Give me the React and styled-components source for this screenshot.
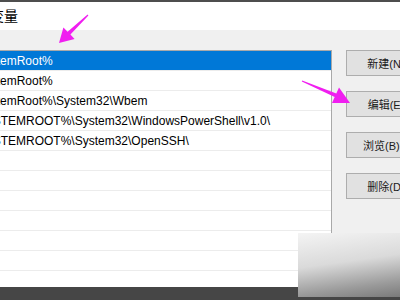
import React from "react";
import styled, { createGlobalStyle } from "styled-components";

const GlobalStyle = createGlobalStyle`
  html, body {
    margin: 0;
    padding: 0;
    background: #f0f0f0;
  }
  body {
    font-family: "Liberation Sans", "Noto Sans CJK SC", sans-serif;
  }
`;

const Page = styled.div`
  position: relative;
  width: 400px;
  height: 300px;
  overflow: hidden;
  display: flex;
  flex-direction: column;
`;

const TopStrip = styled.div`
  height: 2px;
  background: #4e4e4e;
`;

const TitleBar = styled.div`
  height: 28px;
  background: #ffffff;
  display: flex;
  align-items: center;
  padding-bottom: 3px;
  box-sizing: border-box;
  overflow: hidden;
`;

const Title = styled.span`
  margin-left: -66px;
  font-size: 14px;
  color: #000;
  white-space: nowrap;
`;

const Body = styled.div`
  flex: 1;
  display: flex;
  padding-top: 20px;
  background: #f0f0f0;
  overflow: hidden;
`;

const ListBox = styled.div`
  margin-left: -40px;
  width: 372px;
  flex-shrink: 0;
  box-sizing: border-box;
  border: 1px solid #a9a9a9;
  background: #ffffff;
  align-self: flex-start;
`;

const Row = styled.div`
  height: 20px;
  box-sizing: border-box;
  border-bottom: 1px solid #ececec;
  padding-left: 5px;
  display: flex;
  align-items: center;
  font-size: 12px;
  white-space: nowrap;
  color: ${(p) => (p.$selected ? "#ffffff" : "#000000")};
  background: ${(p) => (p.$selected ? "#0078d7" : "transparent")};
`;

const ButtonColumn = styled.div`
  display: flex;
  flex-direction: column;
  padding-left: 14px;
  flex-shrink: 0;
`;

const Button = styled.div`
  width: 80px;
  height: 26px;
  box-sizing: border-box;
  border: 1px solid #adadad;
  background: #e1e1e1;
  font-size: 11px;
  color: #1a1a1a;
  display: flex;
  align-items: center;
  justify-content: center;
  white-space: nowrap;
  margin-bottom: ${(p) => p.$gap}px;
`;

const BottomBar = styled.div`
  height: 13px;
  background: #464646;
`;

const Shade = styled.div`
  position: absolute;
  left: 298px;
  top: 233px;
  width: 102px;
  height: 64px;
  background: linear-gradient(172deg, #f4f4f4 0%, #dadada 45%, #9a9a9a 80%, #7a7a7a 100%);
`;

const Arrows = styled.svg`
  position: absolute;
  left: 0;
  top: 0;
  pointer-events: none;
`;

const paths = [
  "%SystemRoot%",
  "%SystemRoot%",
  "%SystemRoot%\\System32\\Wbem",
  "%SYSTEMROOT%\\System32\\WindowsPowerShell\\v1.0\\",
  "%SYSTEMROOT%\\System32\\OpenSSH\\",
  "", "", "", "", "", "", "", "",
];

const buttons = [
  { label: "新建(N)", gap: 15 },
  { label: "编辑(E)", gap: 15 },
  { label: "浏览(B)...", gap: 15 },
  { label: "删除(D)", gap: 35 },
  { label: "上移(U)", gap: 15 },
];

export default function App() {
  return (
    <>
      <GlobalStyle />
      <Page>
        <TopStrip />
        <TitleBar>
          <Title>编辑环境变量</Title>
        </TitleBar>
        <Body>
          <ListBox>
            {paths.map((p, i) => (
              <Row key={i} $selected={i === 0}>
                {p}
              </Row>
            ))}
          </ListBox>
          <ButtonColumn>
            {buttons.map((b) => (
              <Button key={b.label} $gap={b.gap}>
                {b.label}
              </Button>
            ))}
          </ButtonColumn>
        </Body>
        <BottomBar />
        <Shade />
        <Arrows width="400" height="300" viewBox="0 0 400 300">
          <polygon
            fill="#f01ef0"
            points="87.6,14.6 67.6,31.8 63.4,27.4 59,43 74.6,39 70.4,34.6 88.4,15.4"
          />
          <polygon
            fill="#f01ef0"
            points="302.2,80.5 336.3,93.5 339,87.6 350,103 332,103 334.7,97.1 301.8,81.5"
          />
        </Arrows>
      </Page>
    </>
  );
}
